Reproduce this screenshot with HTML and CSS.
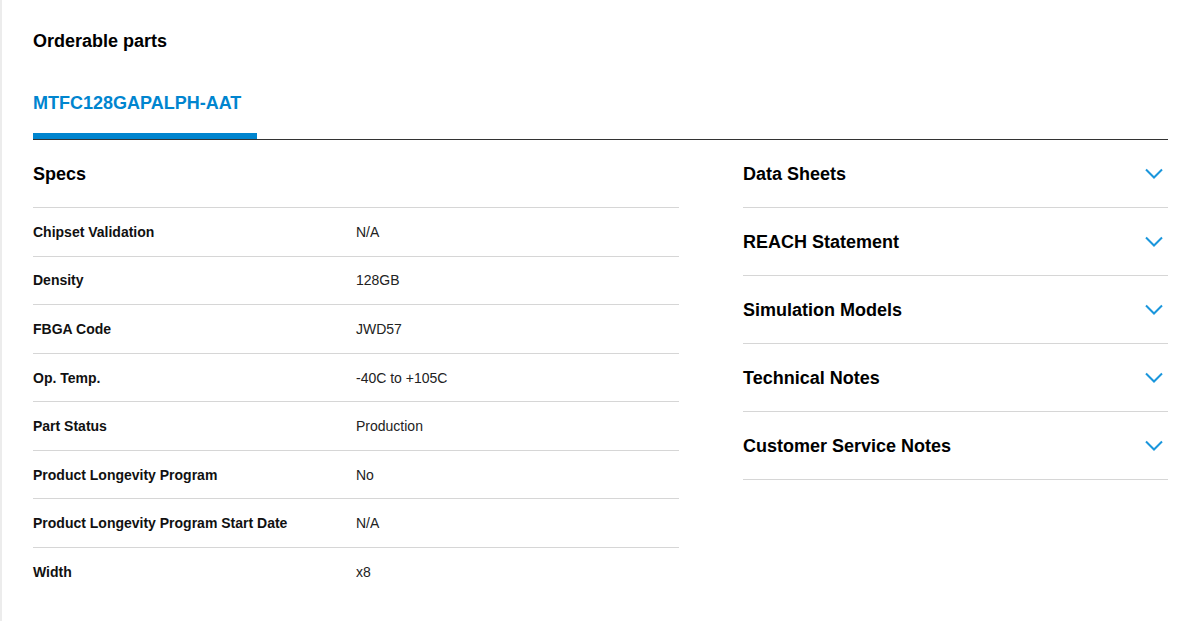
FILE: index.html
```html
<!DOCTYPE html>
<html lang="en">
<head>
<meta charset="utf-8">
<title>Orderable parts</title>
<link rel="stylesheet" href="styles.css">
</head>
<body>
<div class="page">
  <h2 class="title">Orderable parts</h2>
  <div class="tabs">
    <div class="tab active">MTFC128GAPALPH-AAT</div>
  </div>
  <div class="content">
    <section class="specs">
      <h3 class="section-head">Specs</h3>
      <div class="row"><div class="label">Chipset Validation</div><div class="value">N/A</div></div>
      <div class="row"><div class="label">Density</div><div class="value">128GB</div></div>
      <div class="row"><div class="label">FBGA Code</div><div class="value">JWD57</div></div>
      <div class="row"><div class="label">Op. Temp.</div><div class="value">-40C to +105C</div></div>
      <div class="row"><div class="label">Part Status</div><div class="value">Production</div></div>
      <div class="row"><div class="label">Product Longevity Program</div><div class="value">No</div></div>
      <div class="row"><div class="label">Product Longevity Program Start Date</div><div class="value">N/A</div></div>
      <div class="row"><div class="label">Width</div><div class="value">x8</div></div>
    </section>
    <section class="docs">
      <div class="acc"><span>Data Sheets</span><svg class="chev" viewBox="0 0 24 24" width="24" height="24"><path d="M4 7.5l8 8 8-8"/></svg></div>
      <div class="acc"><span>REACH Statement</span><svg class="chev" viewBox="0 0 24 24" width="24" height="24"><path d="M4 7.5l8 8 8-8"/></svg></div>
      <div class="acc"><span>Simulation Models</span><svg class="chev" viewBox="0 0 24 24" width="24" height="24"><path d="M4 7.5l8 8 8-8"/></svg></div>
      <div class="acc"><span>Technical Notes</span><svg class="chev" viewBox="0 0 24 24" width="24" height="24"><path d="M4 7.5l8 8 8-8"/></svg></div>
      <div class="acc"><span>Customer Service Notes</span><svg class="chev" viewBox="0 0 24 24" width="24" height="24"><path d="M4 7.5l8 8 8-8"/></svg></div>
    </section>
  </div>
</div>
</body>
</html>
```
FILE: styles.css
```css
html, body {
  margin: 0;
  padding: 0;
  background: #fff;
}
body {
  font-family: "Liberation Sans", Arial, sans-serif;
  color: #000;
}
.page {
  border-left: 2px solid #ececec;
  min-height: 621px;
  box-sizing: border-box;
  padding: 29px 29px 0 31px;
}
.title {
  margin: 0;
  font-size: 18px;
  line-height: 24px;
  font-weight: bold;
}
.tabs {
  margin-top: 38px;
  display: flex;
  border-bottom: 1px solid #333;
}
.tab {
  font-size: 18px;
  line-height: 24px;
  font-weight: bold;
  color: #0085cf;
  padding: 0 16px 18px 0;
}
.tab.active {
  border-bottom: 6px solid #0085cf;
}
.content {
  display: grid;
  grid-template-columns: 646px 1fr;
  column-gap: 64px;
}
.section-head {
  margin: 0;
  font-size: 18px;
  line-height: 24px;
  font-weight: bold;
  padding: 22px 0 21px;
  border-bottom: 1px solid #d6d6d6;
}
.row {
  display: grid;
  grid-template-columns: 1fr 1fr;
  font-size: 14px;
  line-height: 19.6px;
  padding: 14.8px 0 13.2px;
  border-bottom: 1px solid #d6d6d6;
}
.row:last-child {
  border-bottom: none;
}
.label {
  font-weight: bold;
  color: #111;
}
.value {
  color: #222;
}
.acc {
  display: flex;
  align-items: center;
  justify-content: space-between;
  font-size: 18px;
  line-height: 24px;
  font-weight: bold;
  padding: 22px 0 21px;
  border-bottom: 1px solid #d6d6d6;
}
.chev {
  margin-right: 2px;
  fill: none;
  stroke: #1a96dc;
  stroke-width: 2;
}
```
